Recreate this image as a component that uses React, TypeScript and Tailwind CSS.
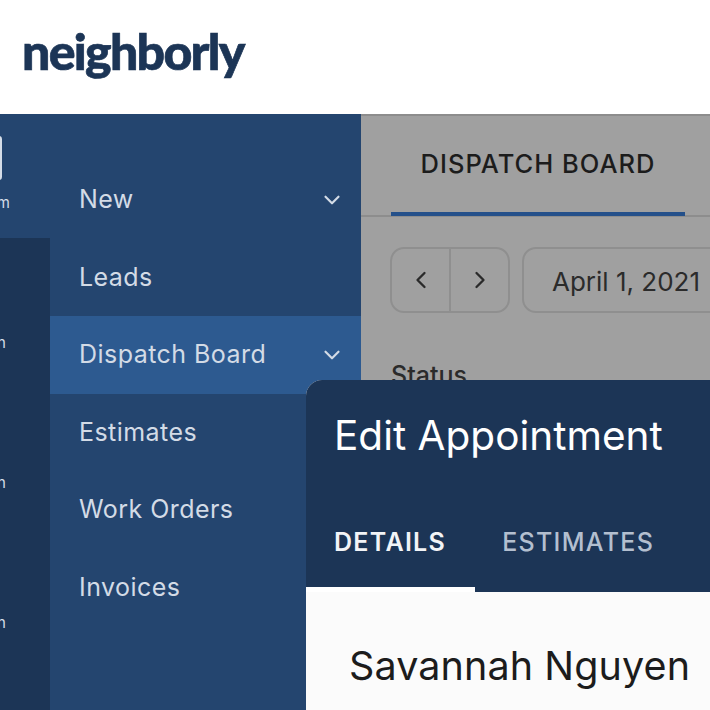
import { ChevronDown, ChevronLeft, ChevronRight } from 'lucide-react';

const nav = [
  { label: 'New', caret: true },
  { label: 'Leads' },
  { label: 'Dispatch Board', caret: true, active: true },
  { label: 'Estimates' },
  { label: 'Work Orders' },
  { label: 'Invoices' },
];

export default function App() {
  return (
    <div className="relative flex h-[710px] w-[710px] flex-col overflow-hidden bg-white font-['Inter',sans-serif]">
      <header className="flex h-[114px] shrink-0 items-start bg-white pl-[22px] pt-[21px]">
        <span className="font-['Lato',sans-serif] text-[50px] leading-[60px] font-black tracking-[-1.7px] text-[#1c3556] [-webkit-text-stroke:0.7px_#1c3556]">neighborly</span>
      </header>

      <div className="flex min-h-0 flex-1">
        {/* icon rail, cut off by the left edge */}
        <aside className="flex w-[50px] shrink-0 flex-col bg-[#24456f]">
          <div className="flex h-[124px] shrink-0 flex-col items-end overflow-hidden pt-[22px]">
            <div className="mr-[48px] h-[44px] w-[24px] shrink-0 rounded-[3px] border-2 border-[#d5dde8]" />
            <span className="mr-[40px] mt-[14px] text-[15px] leading-[18px] text-[#d5dde8]">m</span>
          </div>
          <div className="flex flex-1 flex-col bg-[#1c3556] pt-[96px] text-[15px] leading-[18px] text-[#d5dde8]">
            <span className="-ml-[3px] h-[140px]">n</span>
            <span className="-ml-[3px] h-[140px]">n</span>
            <span className="-ml-[3px]">n</span>
          </div>
        </aside>

        <nav className="flex w-[311px] shrink-0 flex-col bg-[#24456f] pt-[47px]">
          {nav.map((item) => (
            <div
              key={item.label}
              className={`flex h-[77.5px] shrink-0 items-center justify-between pl-[29px] pr-[16px] text-[25px] tracking-[0.45px] text-[#d3dbe6] ${
                item.active ? 'bg-[#2d5a90]' : ''
              }`}
            >
              <span>{item.label}</span>
              {item.caret && <ChevronDown size={26} strokeWidth={2} className="text-[#d3dbe6]" />}
            </div>
          ))}
        </nav>

        <main className="min-w-0 flex-1 overflow-hidden border-t-2 border-[#8d8d8d] bg-[#a0a0a0]">
          <div className="h-[101px] border-b-2 border-[#8d8d8d] pl-[30px]">
            <div className="flex h-[100px] w-[294px] items-center justify-center border-b-[4px] border-[#24508a] text-[25.5px] font-medium tracking-[1px] whitespace-nowrap text-[#1c1c1c]">
              DISPATCH BOARD
            </div>
          </div>
          <div className="mt-[30px] flex gap-[12px] pl-[29px]">
            <div className="flex h-[66px] w-[120px] shrink-0 rounded-[14px] border-2 border-[#8f8f8f]">
              <div className="flex w-[59px] items-center justify-center border-r-2 border-[#8f8f8f]">
                <ChevronLeft size={28} strokeWidth={2} className="text-[#2a2a2a]" />
              </div>
              <div className="flex flex-1 items-center justify-center">
                <ChevronRight size={28} strokeWidth={2} className="text-[#2a2a2a]" />
              </div>
            </div>
            <div className="flex h-[66px] w-[240px] shrink-0 items-center rounded-l-[14px] border-2 border-[#8f8f8f] pt-[2px] pl-[28px] text-[26px] whitespace-nowrap text-[#2b2b2b]">
              April 1, 2021
            </div>
          </div>
          <div className="mt-[44px] pl-[30px] text-[25px] font-medium text-[#2b2b2b]">Status</div>
        </main>
      </div>

      {/* modal over the dimmed page */}
      <section className="absolute top-[380px] left-[306px] flex h-[330px] w-[404px] flex-col overflow-hidden rounded-tl-[16px] bg-[#fbfbfb]">
        <div className="flex h-[212px] shrink-0 flex-col bg-[#1c3556]">
          <h2 className="pt-[28px] pl-[28px] text-[40.5px] leading-[56px] font-normal whitespace-nowrap text-white">Edit Appointment</h2>
          <div className="mt-[58px] flex gap-[56px] pl-[28px] text-[25px] leading-[40px] font-semibold tracking-[1.3px]">
            <span className="text-[#f2f4f7]">DETAILS</span>
            <span className="font-medium text-[#b3bfcf]">ESTIMATES</span>
          </div>
        </div>
        <div className="-mt-[5px] h-[5px] w-[169px] shrink-0 bg-white" />
        <div className="pt-[44px] pl-[43px] text-[39.5px] tracking-[0.1px] leading-[60px] whitespace-nowrap text-[#1c1c1c]">
          Savannah Nguyen
        </div>
      </section>
    </div>
  );
}
